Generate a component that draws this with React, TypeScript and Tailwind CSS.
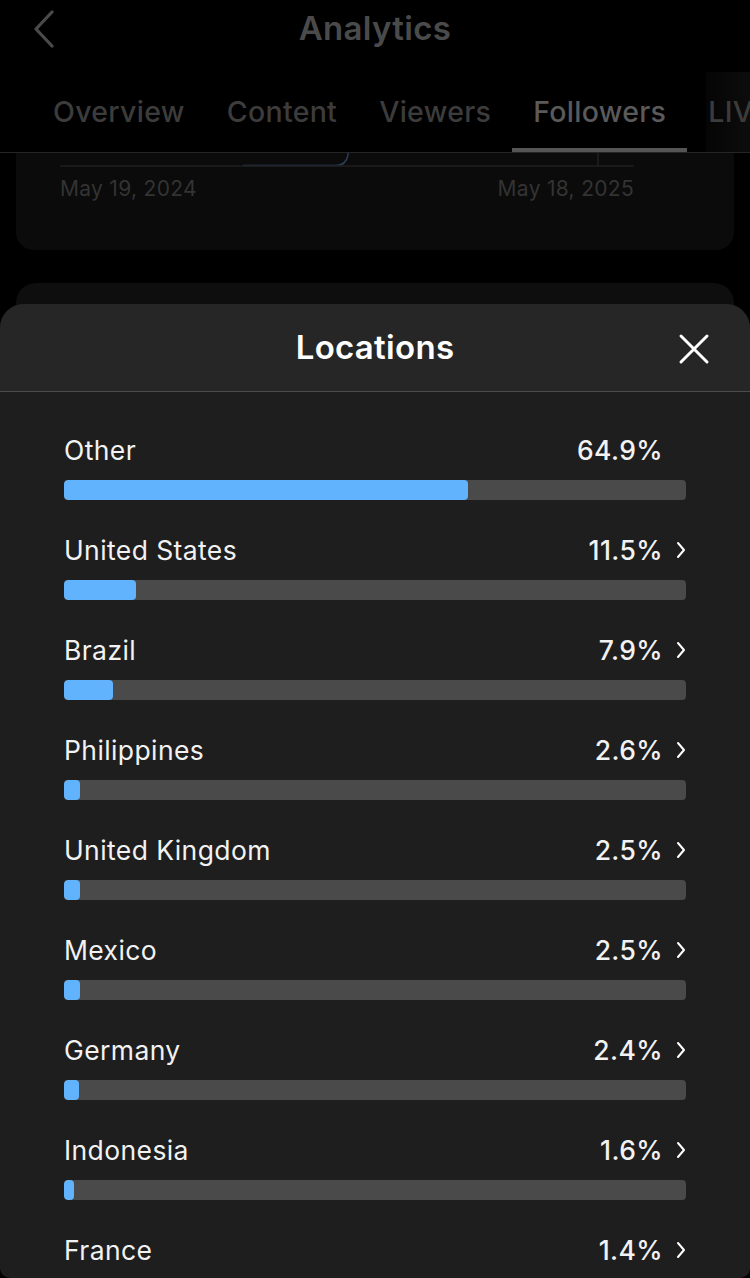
import React from "react";

const rows: { name: string; pct: number; chevron: boolean }[] = [
  { name: "Other", pct: 64.9, chevron: false },
  { name: "United States", pct: 11.5, chevron: true },
  { name: "Brazil", pct: 7.9, chevron: true },
  { name: "Philippines", pct: 2.6, chevron: true },
  { name: "United Kingdom", pct: 2.5, chevron: true },
  { name: "Mexico", pct: 2.5, chevron: true },
  { name: "Germany", pct: 2.4, chevron: true },
  { name: "Indonesia", pct: 1.6, chevron: true },
  { name: "France", pct: 1.4, chevron: true },
];

const tabs = ["Overview", "Content", "Viewers", "Followers", "LIVE"];

export default function App() {
  return (
    <div
      className="relative w-[750px] h-[1278px] overflow-hidden bg-black"
      style={{ fontFamily: "Inter, 'Noto Sans', sans-serif" }}
    >
      {/* Header */}
      <div className="relative h-[153px] border-b border-[#262626]">
        <div className="absolute right-0 top-[72px] w-[44px] h-[80px] bg-gradient-to-r from-[#050505] to-[#0d0d0d]" />
        <div className="relative h-[58px] flex items-center justify-center">
          <svg
            className="absolute left-[32px] top-[10px]"
            width="24"
            height="38"
            viewBox="0 0 24 38"
            fill="none"
          >
            <path d="M20 2 L4 19 L20 36" stroke="#4a4a4a" strokeWidth="3.2" strokeLinecap="round" strokeLinejoin="round" />
          </svg>
          <span className="text-[33px] font-semibold text-[#4a4a4a] tracking-[0.3px]">Analytics</span>
        </div>
        <div className="flex pl-[32px] mt-[36px] whitespace-nowrap">
          {tabs.map((t) => {
            const active = t === "Followers";
            return (
              <div key={t} className="relative px-[21px] h-[58px]">
                <span
                  className={
                    "text-[28.5px] font-medium leading-[36px] tracking-[0.3px] " +
                    (active ? "text-[#5a5a5a]" : "text-[#3c3c3c]")
                  }
                >
                  {t}
                </span>
                {active && (
                  <div className="absolute left-0 right-0 bottom-0 h-[4px] bg-[#555555]" />
                )}
              </div>
            );
          })}
        </div>
      </div>

      {/* Card 1 (partially visible) */}
      <div className="mx-[16px] h-[97px] bg-[#0b0b0b] rounded-b-[18px] px-[44px] relative">
        <svg className="absolute left-[44px] top-0" width="576" height="14" viewBox="0 0 576 14" fill="none">
          <path d="M183 12.5 L276 12.5 Q286 12.5 288 2 L288 0" stroke="#2a3e55" strokeWidth="1.5" />
          <line x1="538" y1="0" x2="538" y2="13" stroke="#2a2a2a" strokeWidth="1" />
          <line x1="0" y1="13" x2="574" y2="13" stroke="#1f1f1f" strokeWidth="1.5" />
        </svg>
        <div className="flex justify-between pt-[24px] w-[574px] text-[21px] tracking-[0.3px] text-[#333333] leading-[24px]">
          <span>May 19, 2024</span>
          <span>May 18, 2025</span>
        </div>
      </div>

      {/* Card 2 */}
      <div className="mx-[16px] mt-[33px] h-[200px] bg-[#0e0e0e] rounded-[20px]" />

      {/* Sheet */}
      <div className="absolute left-0 right-0 top-[304px] bottom-0 bg-[#1e1e1e] rounded-t-[24px] rounded-b-[10px] overflow-hidden">
        <div className="relative h-[88px] bg-[#262626] border-b border-[#4c4c4c] flex items-center justify-center">
          <span className="text-[33px] font-semibold text-white tracking-[0.3px]">Locations</span>
          <svg
            className="absolute right-[40px] top-[29px]"
            width="32"
            height="32"
            viewBox="0 0 32 32"
            fill="none"
          >
            <path d="M3 3 L29 29 M29 3 L3 29" stroke="#ffffff" strokeWidth="3" strokeLinecap="round" />
          </svg>
        </div>
        <div className="px-[64px] pt-[42px]">
          {rows.map((r) => (
            <div key={r.name} className="mb-[34px]">
              <div className="flex items-center justify-between h-[32px]">
                <span className="text-[26.5px] tracking-[0.4px] text-[#f2f2f2] leading-[32px]">{r.name}</span>
                <div className="flex items-center">
                  <span className="text-[26.5px] tracking-[0.4px] font-medium text-[#f2f2f2] leading-[32px]">{r.pct}%</span>
                  <div className="w-[23px] flex justify-end">
                    {r.chevron && (
                      <svg width="10" height="18" viewBox="0 0 10 18" fill="none">
                        <path d="M2 2 L8 9 L2 16" stroke="#ffffff" strokeWidth="2" strokeLinecap="round" strokeLinejoin="round" />
                      </svg>
                    )}
                  </div>
                </div>
              </div>
              <div className="mt-[14px] h-[20px] rounded-[4px] bg-[#4a4a4a] overflow-hidden">
                <div
                  className="h-full rounded-[4px] bg-[#62b3fd]"
                  style={{ width: `${r.pct}%` }}
                />
              </div>
            </div>
          ))}
        </div>
      </div>
    </div>
  );
}
